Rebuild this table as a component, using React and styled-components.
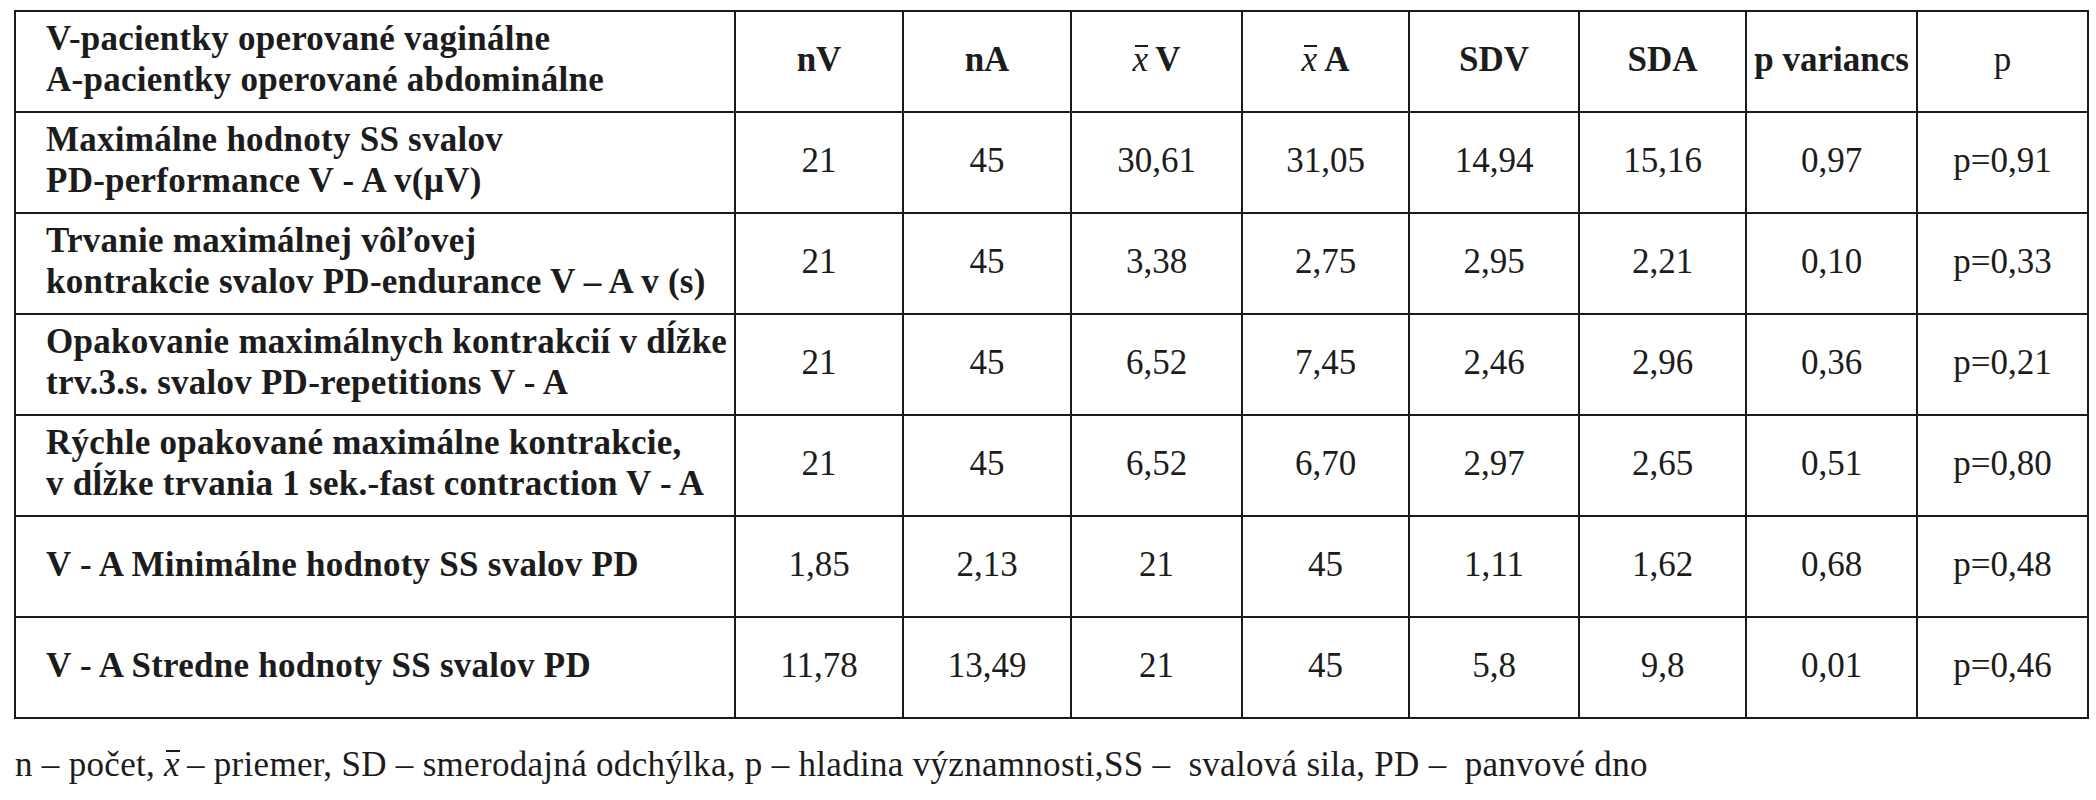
import React from "react";
import styled, { createGlobalStyle } from "styled-components";

const Global = createGlobalStyle`
  html, body { margin: 0; padding: 0; background: #ffffff; }
  body { font-family: "Liberation Serif", serif; color: #1c1c1c; }
`;

const Page = styled.div`
  padding: 10px 0 0 14px;
  width: 2096px;
  box-sizing: border-box;
  font-family: "Liberation Serif", serif;
`;

const Table = styled.table`
  border-collapse: collapse;
  table-layout: fixed;
  width: 2073px;
  font-family: "Liberation Serif", serif;
  font-size: 35px;
  color: #1c1c1c;
`;

const Col = styled.col`
  width: ${(p) => p.$w}px;
`;

const Row = styled.tr`
  height: 101px;
`;

const Cell = styled.td`
  border: 2px solid #1a1a1a;
  padding: 0 2px 5px;
  text-align: center;
  vertical-align: middle;
  font-family: "Liberation Serif", serif;
  font-weight: ${(p) => (p.$bold ? 700 : 400)};
  line-height: 41px;
  white-space: nowrap;
`;

const LabelCell = styled.td`
  border: 2px solid #1a1a1a;
  padding: 0 0 5px 30px;
  text-align: left;
  vertical-align: middle;
  font-family: "Liberation Serif", serif;
  font-weight: 700;
  line-height: 41px;
  letter-spacing: 0.25px;
  white-space: nowrap;
`;

const Xbar = styled.span`
  position: relative;
  display: inline-block;
  font-family: "Liberation Serif", serif;
  font-style: italic;
  font-weight: 400;
  margin-right: 7px;
  &::before {
    content: "";
    position: absolute;
    left: 2px;
    right: 0;
    top: 6px;
    height: 2px;
    background: currentColor;
  }
`;

const Footer = styled.p`
  margin: 25px 0 0 1px;
  font-family: "Liberation Serif", serif;
  font-size: 35px;
  line-height: 41px;
  letter-spacing: 0.3px;
  white-space: nowrap;
  color: #1c1c1c;
`;

const widths = [720, 168, 168, 171, 167, 170, 167, 171, 171];

const rows = [
  {
    label: ["Maximálne hodnoty SS svalov", "PD-performance V - A v(µV)"],
    values: ["21", "45", "30,61", "31,05", "14,94", "15,16", "0,97", "p=0,91"],
  },
  {
    label: ["Trvanie maximálnej vôľovej", "kontrakcie svalov PD-endurance V – A v (s)"],
    values: ["21", "45", "3,38", "2,75", "2,95", "2,21", "0,10", "p=0,33"],
  },
  {
    label: ["Opakovanie maximálnych kontrakcií v dĺžke", "trv.3.s. svalov PD-repetitions V - A"],
    values: ["21", "45", "6,52", "7,45", "2,46", "2,96", "0,36", "p=0,21"],
  },
  {
    label: ["Rýchle opakované maximálne kontrakcie,", "v dĺžke trvania 1 sek.-fast contraction V - A"],
    values: ["21", "45", "6,52", "6,70", "2,97", "2,65", "0,51", "p=0,80"],
  },
  {
    label: ["V - A Minimálne hodnoty SS svalov PD"],
    values: ["1,85", "2,13", "21", "45", "1,11", "1,62", "0,68", "p=0,48"],
  },
  {
    label: ["V - A Stredne hodnoty SS svalov PD"],
    values: ["11,78", "13,49", "21", "45", "5,8", "9,8", "0,01", "p=0,46"],
  },
];

const XB = () => <Xbar>x</Xbar>;

export default function App() {
  return (
    <Page>
      <Global />
      <Table>
        <colgroup>
          {widths.map((w, i) => (
            <Col key={i} $w={w} />
          ))}
        </colgroup>
        <tbody>
          <Row>
            <LabelCell>
              V-pacientky operované vaginálne
              <br />
              A-pacientky operované abdominálne
            </LabelCell>
            <Cell $bold>nV</Cell>
            <Cell $bold>nA</Cell>
            <Cell $bold>
              <XB />V
            </Cell>
            <Cell $bold>
              <XB />A
            </Cell>
            <Cell $bold>SDV</Cell>
            <Cell $bold>SDA</Cell>
            <Cell $bold>p variancs</Cell>
            <Cell>p</Cell>
          </Row>
          {rows.map((r, i) => (
            <Row key={i}>
              <LabelCell>
                {r.label.map((l, j) => (
                  <React.Fragment key={j}>
                    {j > 0 && <br />}
                    {l}
                  </React.Fragment>
                ))}
              </LabelCell>
              {r.values.map((v, j) => (
                <Cell key={j}>{v}</Cell>
              ))}
            </Row>
          ))}
        </tbody>
      </Table>
      <Footer>
        n – počet, <XB />– priemer, SD – smerodajná odchýlka, p – hladina významnosti,SS –&nbsp; svalová sila, PD –&nbsp; panvové dno
      </Footer>
    </Page>
  );
}
